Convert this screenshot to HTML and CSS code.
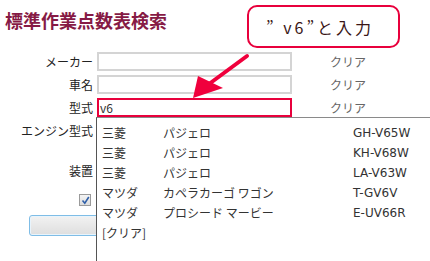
FILE: index.html
```html
<!DOCTYPE html>
<html lang="ja">
<head>
<meta charset="utf-8">
<title>標準作業点数表検索</title>
<link rel="stylesheet" href="styles.css">
</head>
<body>
<div class="page">
  <h1 class="title">標準作業点数表検索</h1>
  <div class="form">
    <label class="lbl">メーカー</label>
    <div class="field"></div>
    <span class="clear">クリア</span>

    <label class="lbl">車名</label>
    <div class="field"></div>
    <span class="clear">クリア</span>

    <label class="lbl">型式</label>
    <div class="field active">v6</div>
    <span class="clear">クリア</span>

    <label class="lbl row-tall first">エンジン型式</label>
    <div class="row-tall first"></div>
    <span class="row-tall first"></span>

    <label class="lbl row-tall"></label>
    <div class="row-tall"></div>
    <span class="row-tall"></span>

    <label class="lbl row-tall">装置</label>
    <div class="row-tall"></div>
    <span class="row-tall"></span>

    <div class="lbl check-cell"><span class="check"><svg width="9" height="9" viewBox="0 0 9 9"><path d="M1.5 4.5 L3.8 7.2 L7.8 1" fill="none" stroke="#2f5fa8" stroke-width="1.6"/></svg></span></div>
    <div class="check-cell"></div>
    <span class="check-cell"></span>
  </div>
  <div class="btn-row"><button class="btn" type="button"></button></div>

  <div class="suggest">
    <div class="sg-row"><span class="c-mk">三菱</span><span class="c-car">パジェロ</span><span class="c-mdl">GH-V65W</span></div>
    <div class="sg-row"><span class="c-mk">三菱</span><span class="c-car">パジェロ</span><span class="c-mdl">KH-V68W</span></div>
    <div class="sg-row"><span class="c-mk">三菱</span><span class="c-car">パジェロ</span><span class="c-mdl">LA-V63W</span></div>
    <div class="sg-row"><span class="c-mk">マツダ</span><span class="c-car">カペラカーゴ ワゴン</span><span class="c-mdl">T-GV6V</span></div>
    <div class="sg-row"><span class="c-mk">マツダ</span><span class="c-car">プロシード マービー</span><span class="c-mdl">E-UV66R</span></div>
    <div class="sg-row"><span class="c-mk">[クリア]</span></div>
  </div>

  <div class="callout">” v6”と入力</div>
  <svg class="arrow" width="430" height="261" viewBox="0 0 430 261">
    <line x1="247" y1="56" x2="209" y2="84" stroke="#f0003c" stroke-width="4" stroke-linecap="round"/>
    <polygon points="198,76 193,98 223,88" fill="#f0003c"/>
  </svg>
</div>
</body>
</html>
```
FILE: styles.css
```css
* { box-sizing: border-box; }
html, body { margin: 0; padding: 0; background: #fff; }
body {
  font-family: "Noto Sans CJK JP", "DejaVu Sans", sans-serif;
  font-size: 12px;
  color: #222;
}
.page {
  position: relative;
  width: 430px;
  height: 261px;
  overflow: hidden;
  padding-top: 8px;
}
.title {
  margin: 0 0 20px 5px;
  font-size: 18px;
  line-height: 24px;
  font-weight: bold;
  color: #861a45;
}
.form {
  display: grid;
  grid-template-columns: 93px 195px 1fr;
  column-gap: 4px;
  row-gap: 4px;
  align-items: center;
}
.lbl {
  text-align: right;
  line-height: 19px;
  height: 19px;
}
.field {
  height: 19px;
  border: 2px solid #d4d4d4;
  background: #fff;
  line-height: 15px;
  padding-left: 1px;
  color: #333;
}
.field.active { border-color: #e8003c; }
.clear {
  color: #666;
  padding-left: 34px;
  line-height: 19px;
}
.row-tall { height: 16px; line-height: 16px; }
.row-tall.first { margin-top: 2px; }
.check-cell {
  display: flex;
  justify-content: flex-end;
  padding-right: 2px;
  height: 23px;
  align-items: flex-end;
}
.check {
  width: 12px;
  height: 12px;
  border: 1px solid #9a9a9a;
  background: linear-gradient(#f4f4f4, #dcdcdc);
  display: flex;
  align-items: center;
  justify-content: center;
}
.btn-row { padding: 9px 0 0 29px; }
.btn {
  display: block;
  width: 120px;
  height: 21px;
  border: 1px solid #7fbde6;
  border-radius: 3px;
  background: linear-gradient(#f2f2f2, #dedede);
  box-shadow: inset 0 0 0 1px #e8f4fc;
  padding: 0;
}
.suggest {
  position: absolute;
  left: 96px;
  top: 117px;
  width: 400px;
  height: 160px;
  background: #fff;
  border-left: 1px solid #555;
  border-top: 1px solid #8a8a8a;
  padding-top: 5px;
}
.sg-row {
  display: flex;
  height: 20px;
  line-height: 20px;
  color: #333;
}
.c-mk { width: 66px; padding-left: 5px; }
.c-car { width: 190px; }
.c-mdl { font-family: "DejaVu Sans", sans-serif; font-size: 12px; color: #333; }
.callout {
  position: absolute;
  left: 247px;
  top: 5px;
  width: 153px;
  height: 43px;
  border: 2px solid #e8003c;
  border-radius: 10px;
  background: #fff;
  display: flex;
  align-items: center;
  padding-left: 17px;
  font-size: 16px;
  letter-spacing: 3px;
  white-space: pre;
  color: #3a1616;
}
.arrow {
  position: absolute;
  left: 0;
  top: 0;
  pointer-events: none;
}
```
